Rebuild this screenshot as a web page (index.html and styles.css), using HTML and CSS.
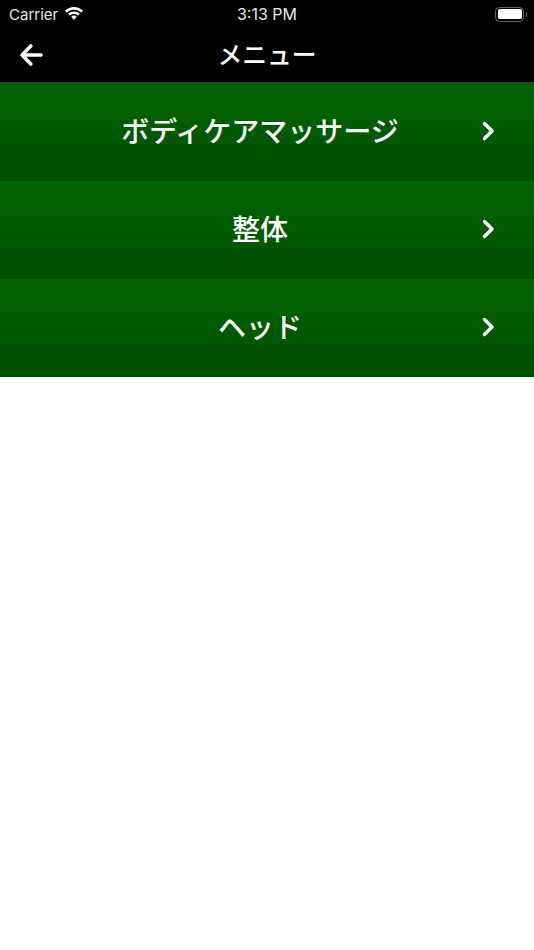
FILE: index.html
```html
<!DOCTYPE html>
<html lang="ja">
<head>
  <meta charset="UTF-8" />
  <meta name="viewport" content="width=device-width, initial-scale=1.0"/>
  <title>メニュー</title>
  <link rel="stylesheet" href="styles.css">
</head>
<body>
  <div class="statusbar">
    <div class="status-left">
      <span class="carrier">Carrier</span>
      <svg class="wifi" width="20" height="16" viewBox="0 0 20 15">
        <path d="M10 3.200c2.800 0 5.400 1.100 7.300 2.900l1.700-1.800C16.600 2 13.500.5 10 .5S3.400 2 1 4.300l1.700 1.800C4.600 4.300 7.200 3.200 10 3.200z" fill="#fff"/>
        <path d="M10 7.400c1.600 0 3 .6 4.100 1.600l1.700-1.800C14.300 5.800 12.300 4.900 10 4.900s-4.300.9-5.800 2.300L5.900 9c1.100-1 2.500-1.600 4.100-1.600z" fill="#fff"/>
        <path d="M10 9.100c-1.100 0-2.100.4-2.800 1.100L10 13.400l2.800-3.200c-.7-.7-1.700-1.100-2.800-1.100z" fill="#fff"/>
      </svg>
    </div>
    <span class="time">3:13 PM</span>
    <div class="status-right">
      <div class="battery"><div class="battery-level"></div></div>
      <div class="battery-cap"></div>
    </div>
  </div>

  <div class="navbar">
    <svg class="back" width="24" height="24" viewBox="0 0 24 24">
      <path d="M22 12H4M11.800 3L3 12l8.800 9" fill="none" stroke="#fff" stroke-width="3.600" stroke-linecap="round" stroke-linejoin="round"/>
    </svg>
    <h1>メニュー</h1>
    <div></div>
  </div>

  <div class="menu">
    <div class="menu-row">
      <span>ボディケアマッサージ</span>
      <svg class="chevron" width="16" height="20" viewBox="0 0 16 20"><path d="M3.500 2.500L11 10l-7.500 7.500" fill="none" stroke="#fff" stroke-width="3.500" stroke-linecap="round" stroke-linejoin="round"/></svg>
    </div>
    <div class="menu-row">
      <span>整体</span>
      <svg class="chevron" width="16" height="20" viewBox="0 0 16 20"><path d="M3.500 2.500L11 10l-7.500 7.500" fill="none" stroke="#fff" stroke-width="3.500" stroke-linecap="round" stroke-linejoin="round"/></svg>
    </div>
    <div class="menu-row">
      <span>ヘッド</span>
      <svg class="chevron" width="16" height="20" viewBox="0 0 16 20"><path d="M3.500 2.500L11 10l-7.500 7.500" fill="none" stroke="#fff" stroke-width="3.500" stroke-linecap="round" stroke-linejoin="round"/></svg>
    </div>
  </div>
</body>
</html>
```

FILE: styles.css
```css
* {
  box-sizing: border-box;
  margin: 0;
  padding: 0;
}

body {
  background-color: #fff;
  color: #fff;
  font-family: Inter, "Noto Sans CJK JP", sans-serif;
}

.statusbar {
  display: grid;
  grid-template-columns: 1fr auto 1fr;
  align-items: center;
  height: 28px;
  padding: 0 7px 0 9px;
  background-color: #000;
  font-size: 15px;
}

.status-left {
  display: flex;
  align-items: center;
  gap: 6px;
}

.carrier {
  color: #e8e8e8;
}

.time {
  color: #e8e8e8;
  font-size: 16px;
  margin-right: 2px;
}

.status-right {
  display: flex;
  align-items: center;
  justify-content: flex-end;
}

.battery {
  width: 29px;
  height: 15px;
  padding: 1.500px;
  border: 1.500px solid #666;
  border-radius: 4.500px;
}

.battery-level {
  height: 100%;
  background-color: #fff;
  border-radius: 1.500px;
}

.battery-cap {
  width: 1.500px;
  height: 5px;
  margin-left: 1.500px;
  background-color: #666;
  border-radius: 0 1px 1px 0;
}

.navbar {
  display: grid;
  grid-template-columns: 1fr auto 1fr;
  align-items: center;
  height: 55px;
  padding: 0 19px;
  background-color: #000;
  border-bottom: 1px solid #3a3a3a;
}

.navbar h1 {
  padding-bottom: 4px;
  font-size: 24.800px;
  font-weight: 500;
}

.menu-row {
  display: flex;
  align-items: center;
  height: 98px;
  padding: 0 37px 2px 39px;
  background: linear-gradient(#006400, #004f00);
  font-size: 28px;
  font-weight: 500;
}

.menu-row span {
  flex: 1;
  padding-bottom: 3px;
  text-align: center;
}
```
